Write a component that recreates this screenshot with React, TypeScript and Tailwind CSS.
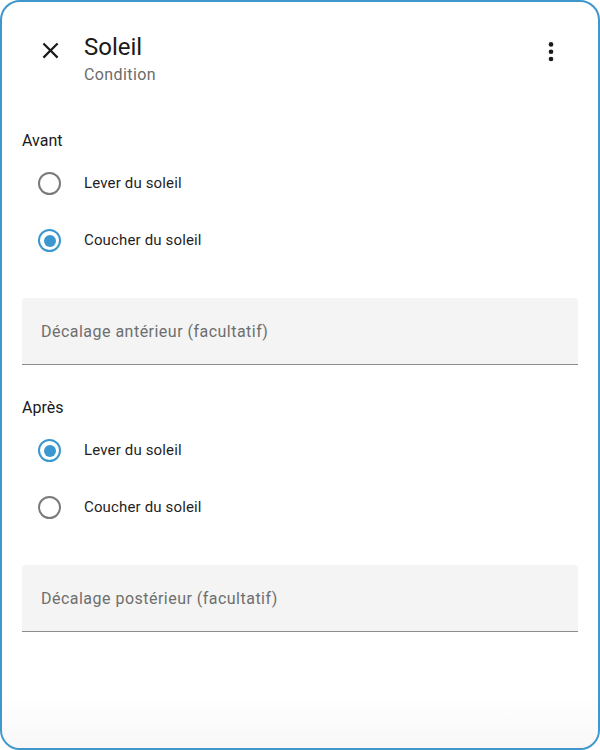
import React from "react";

function Radio({ checked }: { checked: boolean }) {
  return (
    <div
      className={
        "w-[23px] h-[23px] rounded-full border-[2.5px] flex items-center justify-center shrink-0 " +
        (checked ? "border-[#3b97cf]" : "border-[#7a7a7a]")
      }
    >
      {checked && <div className="w-[12px] h-[12px] rounded-full bg-[#3b97cf]" />}
    </div>
  );
}

function Row({ label, checked }: { label: string; checked: boolean }) {
  return (
    <div className="h-[57px] flex items-center">
      <div className="ml-[16px]">
        <Radio checked={checked} />
      </div>
      <span className="ml-[23px] text-[15px] tracking-[0.15px] text-[#1f1f1f]">{label}</span>
    </div>
  );
}

function Field({ placeholder }: { placeholder: string }) {
  return (
    <div className="h-[67px] bg-[#f4f4f4] rounded-t-[4px] border-b border-[#8c8c8c] flex items-center pl-[19px]">
      <span className="text-[16px] tracking-[0.48px] text-[#6e6e6e] mt-[1px]">{placeholder}</span>
    </div>
  );
}

export default function App() {
  return (
    <div className="w-[600px] h-[750px] bg-white" style={{ fontFamily: "Roboto, 'Noto Sans', sans-serif" }}>
      <div className="relative w-[600px] h-[750px] rounded-[20px] border-2 border-[#3f97cb] overflow-hidden bg-white">
        <div className="absolute left-0 right-0 bottom-0 h-[50px] bg-gradient-to-b from-transparent to-[#f0f0f0] opacity-50 pointer-events-none" />
        {/* Header */}
        <div className="flex items-start pt-[28px]">
          <div className="w-[82px] flex justify-center pt-[7px] pl-[14px]">
            <svg width="27" height="27" viewBox="0 0 24 24" fill="#1a1a1a">
              <path d="M19 6.41L17.59 5 12 10.59 6.41 5 5 6.41 10.59 12 5 17.59 6.41 19 12 13.41 17.59 19 19 17.59 13.41 12z" />
            </svg>
          </div>
          <div className="flex-1 pt-[1px]">
            <div className="text-[24px] leading-[32px] text-[#1a1a1a]">Soleil</div>
            <div className="text-[16px] leading-[24px] tracking-[0.4px] text-[#6b6b6b]">Condition</div>
          </div>
          <div className="w-[27px] mr-[34px] pt-[8px]">
            <svg width="28" height="28" viewBox="0 0 24 24" fill="#1a1a1a">
              <circle cx="12" cy="5.5" r="2" />
              <circle cx="12" cy="11.8" r="2" />
              <circle cx="12" cy="18" r="2" />
            </svg>
          </div>
        </div>

        <div className="px-[20px]">
          <div className="mt-[42px] text-[16px] leading-[24px] text-[#1a1a1a]">Avant</div>
          <div className="mt-[2px]">
            <Row label="Lever du soleil" checked={false} />
            <Row label="Coucher du soleil" checked={true} />
          </div>
          <div className="mt-[29px]">
            <Field placeholder="Décalage antérieur (facultatif)" />
          </div>

          <div className="mt-[31px] text-[16px] leading-[24px] text-[#1a1a1a]">Après</div>
          <div className="mt-[2px]">
            <Row label="Lever du soleil" checked={true} />
            <Row label="Coucher du soleil" checked={false} />
          </div>
          <div className="mt-[29px]">
            <Field placeholder="Décalage postérieur (facultatif)" />
          </div>
        </div>
      </div>
    </div>
  );
}
